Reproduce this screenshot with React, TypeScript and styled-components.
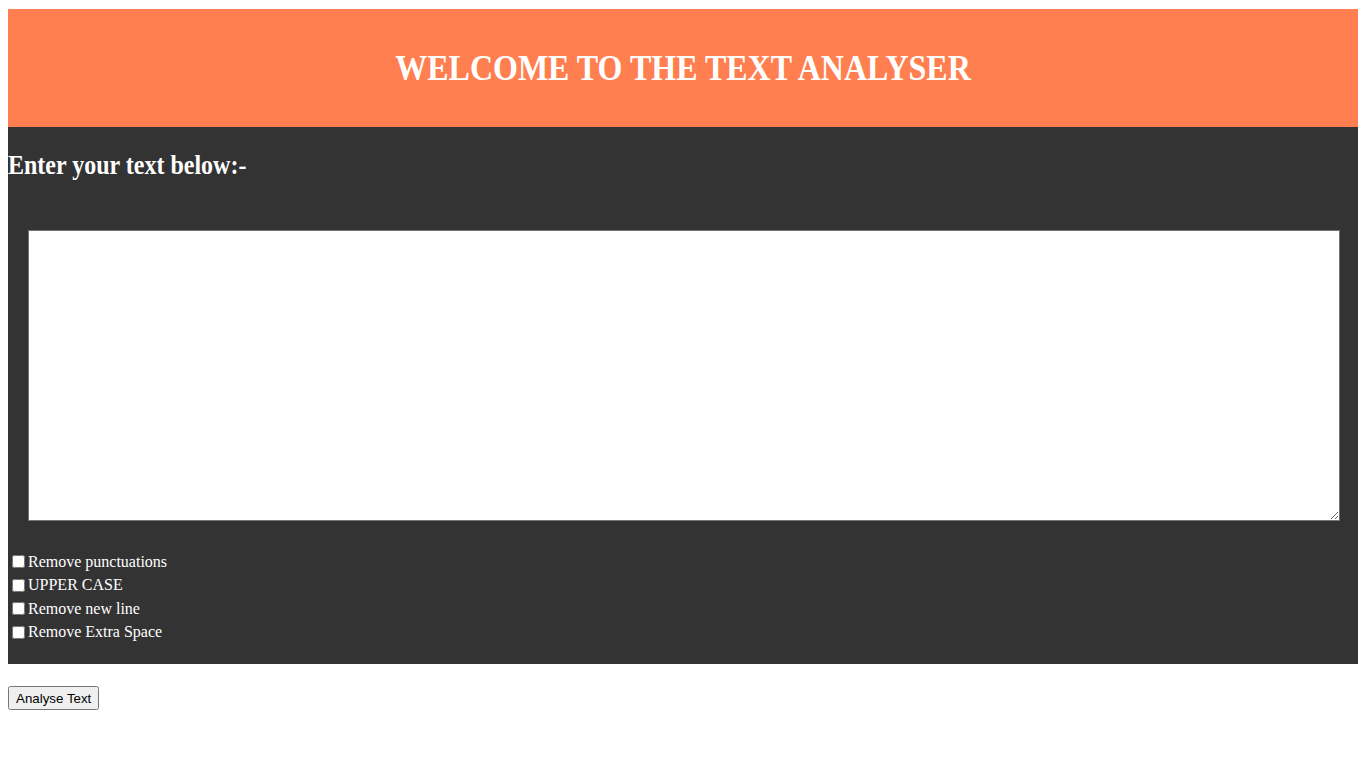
import React from "react";
import styled, { createGlobalStyle } from "styled-components";

const GlobalStyle = createGlobalStyle`
  body {
    margin: 8px;
    font-family: "Liberation Serif", "Times New Roman", serif;
    background: #ffffff;
  }
`;

const Header = styled.header`
  margin-top: 1px;
  height: 118px;
  background: #ff7f50;
  display: flex;
  align-items: center;
  justify-content: center;
`;

const Title = styled.h1`
  margin: 0;
  font-size: 32px;
  font-weight: bold;
  color: #ffffff;
  transform: scaleY(1.12);
`;

const Panel = styled.section`
  background: #333333;
  color: #ffffff;
  padding: 24px 0 20px;
`;

const Heading = styled.h2`
  margin: 0;
  font-size: 24px;
  line-height: 28px;
  font-weight: bold;
  transform: scaleY(1.1);
  transform-origin: left center;
`;

const TextBox = styled.textarea`
  display: block;
  box-sizing: border-box;
  margin: 51px 0 0 20px;
  width: 1312px;
  height: 291px;
  border: 1px solid #767676;
  background: #ffffff;
  font-family: "Liberation Mono", monospace;
`;

const Options = styled.div`
  margin-top: 29px;
  display: flex;
  flex-direction: column;
`;

const Option = styled.label`
  display: flex;
  align-items: center;
  height: 23.5px;
  font-size: 16px;
`;

const Check = styled.input`
  width: 13px;
  height: 13px;
  margin: 0 3px 0 4px;
`;

const AnalyseButton = styled.button`
  margin-top: 22px;
  box-sizing: border-box;
  height: 24px;
  padding: 1px 6px;
  font-family: "Liberation Sans", Arial, sans-serif;
  font-size: 13.33px;
  color: #000000;
`;

const options = [
  "Remove punctuations",
  "UPPER CASE",
  "Remove new line",
  "Remove Extra Space",
];

export default function App() {
  return (
    <>
      <GlobalStyle />
      <Header>
        <Title>WELCOME TO THE TEXT ANALYSER</Title>
      </Header>
      <Panel>
        <Heading>Enter your text below:-</Heading>
        <TextBox />
        <Options>
          {options.map((o) => (
            <Option key={o}>
              <Check type="checkbox" />
              {o}
            </Option>
          ))}
        </Options>
      </Panel>
      <AnalyseButton>Analyse Text</AnalyseButton>
    </>
  );
}
